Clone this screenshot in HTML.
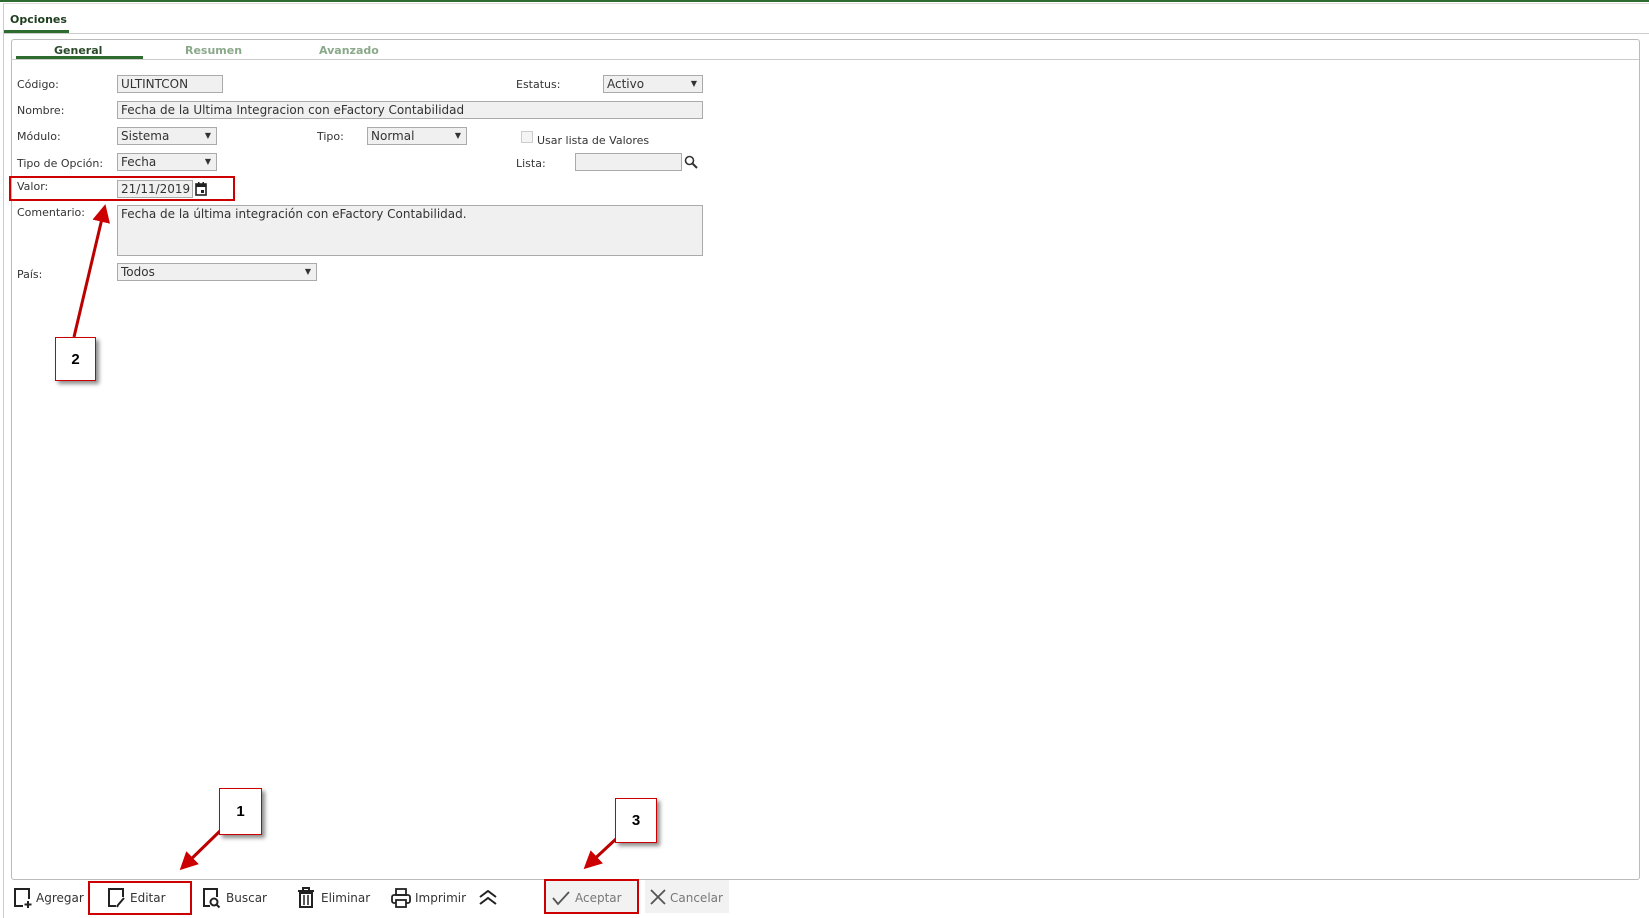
<!DOCTYPE html>
<html><head><meta charset="utf-8"><style>
body{margin:0;width:1649px;height:917px;background:#fff;font-family:"DejaVu Sans","Liberation Sans",sans-serif;font-size:11px;color:#333;position:relative;overflow:hidden}
.a{position:absolute;white-space:nowrap}
.inp{position:absolute;height:18px;border:1px solid #aaa;background:#f0f0f0;box-sizing:border-box;font-size:12px;line-height:16px;padding-left:3px;color:#333}
.sel:after{content:"▼";position:absolute;right:5px;top:0;font-size:8px}
.lbl{position:absolute;font-size:11px;color:#333}
.call{position:absolute;background:#fff;border:1px solid #c00;box-shadow:3px 3px 4px rgba(0,0,0,.45);font:bold 15px "Liberation Sans",sans-serif;color:#000;display:flex;align-items:center;justify-content:center}
.tb{position:absolute;top:891px;font-size:12px;color:#333}
</style></head><body>
<div class="a" style="left:0;top:0;width:1649px;height:2px;background:#2e6b2e"></div>
<div class="a" style="left:3px;top:3px;width:1646px;height:914px;border-left:1px solid #ccc;border-top:1px solid #ddd"></div>
<div class="a" style="left:10px;top:13px;font-weight:bold;font-size:11px;color:#1d3d1d">Opciones</div>
<div class="a" style="left:4px;top:30px;width:65px;height:3px;background:#2e6b2e"></div>
<div class="a" style="left:4px;top:33px;width:1645px;height:1px;background:#ccc"></div>
<div class="a" style="left:11px;top:39px;width:1627px;height:839px;border:1px solid #bbb;border-radius:3px"></div>
<div class="a" style="left:11px;top:59px;width:1628px;height:1px;background:#ccc"></div>
<div class="a" style="left:54px;top:44px;font-weight:bold;color:#2a4a2a">General</div>
<div class="a" style="left:16px;top:56px;width:127px;height:3px;background:#2e6b2e"></div>
<div class="a" style="left:185px;top:44px;font-weight:bold;color:#8aa88a">Resumen</div>
<div class="a" style="left:319px;top:44px;font-weight:bold;color:#8aa88a">Avanzado</div>

<div class="lbl" style="left:17px;top:78px">Código:</div>
<div class="inp" style="left:117px;top:75px;width:106px">ULTINTCON</div>
<div class="lbl" style="left:516px;top:78px">Estatus:</div>
<div class="inp sel" style="left:603px;top:75px;width:100px">Activo</div>
<div class="lbl" style="left:17px;top:104px">Nombre:</div>
<div class="inp" style="left:117px;top:101px;width:586px">Fecha de la Ultima Integracion con eFactory Contabilidad</div>
<div class="lbl" style="left:17px;top:130px">Módulo:</div>
<div class="inp sel" style="left:117px;top:127px;width:100px">Sistema</div>
<div class="lbl" style="left:317px;top:130px">Tipo:</div>
<div class="inp sel" style="left:367px;top:127px;width:100px">Normal</div>
<div class="a" style="left:521px;top:131px;width:10px;height:10px;border:1px solid #ccc;background:#f4f4f4"></div>
<div class="lbl" style="left:537px;top:134px">Usar lista de Valores</div>
<div class="lbl" style="left:17px;top:157px">Tipo de Opción:</div>
<div class="inp sel" style="left:117px;top:153px;width:100px">Fecha</div>
<div class="lbl" style="left:516px;top:157px">Lista:</div>
<div class="inp" style="left:575px;top:153px;width:107px"></div>
<svg class="a" style="left:684px;top:155px" width="14" height="14"><circle cx="5.5" cy="5.5" r="4" fill="none" stroke="#333" stroke-width="1.6"/><path d="M8.5 8.5L13 13" stroke="#333" stroke-width="2"/></svg>
<div class="lbl" style="left:17px;top:180px">Valor:</div>
<div class="inp" style="left:117px;top:180px;width:76px;overflow:hidden">21/11/2019</div>
<svg class="a" style="left:195px;top:182px" width="12" height="14"><rect x="1" y="2" width="10" height="11" fill="none" stroke="#222" stroke-width="1.6"/><rect x="1" y="2" width="10" height="3" fill="#222"/><rect x="3" y="0" width="1.5" height="3" fill="#222"/><rect x="7.5" y="0" width="1.5" height="3" fill="#222"/><rect x="6" y="8" width="3" height="3" fill="#222"/></svg>
<div class="a" style="left:9px;top:176px;width:226px;height:25px;border:2px solid #c00;box-sizing:border-box"></div>
<div class="lbl" style="left:17px;top:206px">Comentario:</div>
<div class="inp" style="left:117px;top:205px;width:586px;height:51px;padding-top:0">Fecha de la última integración con eFactory Contabilidad.</div>
<div class="lbl" style="left:17px;top:268px">País:</div>
<div class="inp sel" style="left:117px;top:263px;width:200px">Todos</div>

<svg class="a" style="left:0;top:0" width="1649" height="917">
<defs><marker id="h" markerWidth="6" markerHeight="6" refX="4" refY="3" orient="auto"><path d="M0,0L6,3L0,6z" fill="#c00"/></marker></defs>
<line x1="74" y1="337" x2="104" y2="210" stroke="#b00" stroke-width="3" marker-end="url(#h)"/>
<line x1="220" y1="831" x2="184" y2="866" stroke="#b00" stroke-width="3" marker-end="url(#h)"/>
<line x1="617" y1="838" x2="588" y2="865" stroke="#b00" stroke-width="3" marker-end="url(#h)"/>
</svg>
<div class="call" style="left:55px;top:337px;width:39px;height:42px">2</div>
<div class="call" style="left:219px;top:788px;width:41px;height:45px">1</div>
<div class="call" style="left:615px;top:798px;width:40px;height:43px">3</div>

<svg class="a" style="left:13px;top:887px" width="20" height="22"><path d="M10 19H2V2h14v10" fill="none" stroke="#222" stroke-width="2"/><path d="M15 14v7M11.5 17.5h7" stroke="#222" stroke-width="2"/></svg>
<div class="tb" style="left:36px">Agregar</div>
<div class="a" style="left:88px;top:881px;width:104px;height:34px;border:2px solid #c00;box-sizing:border-box"></div>
<svg class="a" style="left:107px;top:887px" width="20" height="22"><path d="M9 19H2V2h14v8" fill="none" stroke="#222" stroke-width="2"/><path d="M17 11l-6 7-1 2" fill="none" stroke="#222" stroke-width="2"/></svg>
<div class="tb" style="left:130px">Editar</div>
<svg class="a" style="left:202px;top:887px" width="20" height="22"><path d="M8 19H2V2h13v8" fill="none" stroke="#222" stroke-width="2"/><circle cx="12" cy="15" r="3.5" fill="none" stroke="#222" stroke-width="2"/><path d="M14.5 17.5l3 3" stroke="#222" stroke-width="2"/></svg>
<div class="tb" style="left:226px">Buscar</div>
<svg class="a" style="left:297px;top:887px" width="18" height="22"><path d="M1 4h16M6 4V1h6v3" fill="none" stroke="#222" stroke-width="2"/><path d="M3 6h12v14H3z" fill="none" stroke="#222" stroke-width="2"/><path d="M7 8v10M11 8v10" stroke="#222" stroke-width="1.5"/></svg>
<div class="tb" style="left:321px">Eliminar</div>
<svg class="a" style="left:391px;top:887px" width="20" height="22"><rect x="5" y="2" width="10" height="6" fill="none" stroke="#222" stroke-width="1.8"/><rect x="1" y="8" width="18" height="8" rx="2" fill="none" stroke="#222" stroke-width="1.8"/><rect x="5" y="13" width="10" height="7" fill="#fff" stroke="#222" stroke-width="1.8"/></svg>
<div class="tb" style="left:415px">Imprimir</div>
<svg class="a" style="left:478px;top:889px" width="20" height="16"><path d="M2 8l8-6 8 6M2 15l8-6 8 6" fill="none" stroke="#222" stroke-width="2"/></svg>
<div class="a" style="left:545px;top:880px;width:93px;height:33px;background:#f2f2f2"></div>
<div class="a" style="left:544px;top:879px;width:95px;height:35px;border:2px solid #c00;box-sizing:border-box"></div>
<svg class="a" style="left:552px;top:890px" width="18" height="16"><path d="M1 8l5 6L17 2" fill="none" stroke="#555" stroke-width="1.8"/></svg>
<div class="tb" style="left:575px;color:#777">Aceptar</div>
<div class="a" style="left:645px;top:880px;width:84px;height:33px;background:#f2f2f2"></div>
<svg class="a" style="left:650px;top:889px" width="16" height="16"><path d="M1 1l14 14M15 1L1 15" stroke="#555" stroke-width="1.8"/></svg>
<div class="tb" style="left:670px;color:#777">Cancelar</div>
</body></html>
